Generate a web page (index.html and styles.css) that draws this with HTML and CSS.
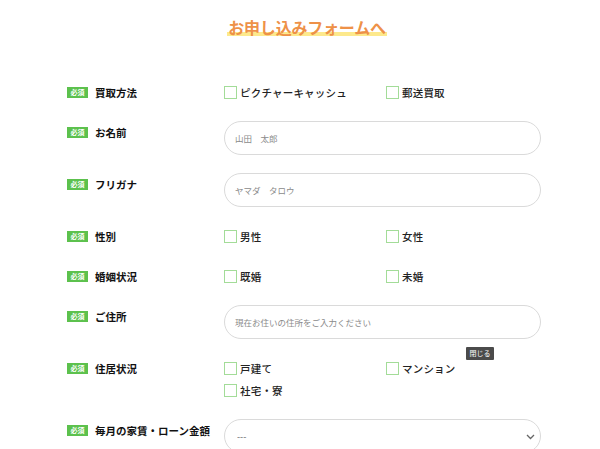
FILE: index.html
```html
<!DOCTYPE html>
<html lang="ja">
<head>
<meta charset="utf-8">
<link rel="stylesheet" href="styles.css">
</head>
<body>
<header class="title"><span class="title-text">お申し込みフォームへ</span></header>
<form class="form">
  <div class="row">
    <div class="label"><span class="badge">必須</span>買取方法</div>
    <div class="choices">
      <label class="choice"><span class="box"></span>ピクチャーキャッシュ</label>
      <label class="choice"><span class="box"></span>郵送買取</label>
    </div>
  </div>
  <div class="row">
    <div class="label"><span class="badge">必須</span>お名前</div>
    <input class="text" type="text" placeholder="山田　太郎">
  </div>
  <div class="row">
    <div class="label"><span class="badge">必須</span>フリガナ</div>
    <input class="text" type="text" placeholder="ヤマダ　タロウ">
  </div>
  <div class="row">
    <div class="label"><span class="badge">必須</span>性別</div>
    <div class="choices">
      <label class="choice"><span class="box"></span>男性</label>
      <label class="choice"><span class="box"></span>女性</label>
    </div>
  </div>
  <div class="row">
    <div class="label"><span class="badge">必須</span>婚姻状況</div>
    <div class="choices">
      <label class="choice"><span class="box"></span>既婚</label>
      <label class="choice"><span class="box"></span>未婚</label>
    </div>
  </div>
  <div class="row">
    <div class="label"><span class="badge">必須</span>ご住所</div>
    <input class="text" type="text" placeholder="現在お住いの住所をご入力ください">
  </div>
  <div class="row">
    <div class="label"><span class="badge">必須</span>住居状況</div>
    <div class="choices with-tip">
      <span class="tooltip">閉じる</span>
      <label class="choice"><span class="box"></span>戸建て</label>
      <label class="choice"><span class="box"></span>マンション</label>
      <label class="choice"><span class="box"></span>社宅・寮</label>
    </div>
  </div>
  <div class="row">
    <div class="label"><span class="badge">必須</span>毎月の家賃・ローン金額</div>
    <div class="select-wrap">
      <select class="select"><option>---</option></select>
      <svg class="chevron" width="9" height="6" viewBox="0 0 9 6"><path d="M1 1l3.5 3.5L8 1" fill="none" stroke="#666" stroke-width="1.3"/></svg>
    </div>
  </div>
</form>
</body>
</html>
```
FILE: styles.css
```css
* { box-sizing: border-box; }
html, body { margin: 0; padding: 0; background: #fff; }
body {
  font-family: "Noto Sans CJK JP", "Noto Sans", sans-serif;
  color: #222;
  width: 600px;
  height: 449px;
  overflow: hidden;
}
.title {
  padding-top: 15px;
  padding-left: 14px;
  text-align: center;
  height: 39px;
}
.title-text {
  font-size: 16px;
  line-height: 24px;
  font-weight: 700;
  color: #ee9148;
  letter-spacing: -0.2px;
  background: linear-gradient(transparent 70%, #fde98c 70%, #fde98c 88%, transparent 88%);
  padding: 0 1px;
}
.form {
  margin-top: 42px;
  padding-left: 67px;
  display: flex;
  flex-direction: column;
  gap: 18px;
}
.row {
  display: grid;
  grid-template-columns: 157px 317px;
  align-items: start;
}
.row-tight { margin-top: -2px; }
.label {
  display: flex;
  align-items: center;
  gap: 7px;
  height: 22px;
  font-size: 10.5px;
  font-weight: 700;
  color: #111;
}
.badge {
  display: inline-block;
  width: 21px;
  height: 11px;
  line-height: 11px;
  text-align: center;
  font-size: 7px;
  font-weight: 700;
  color: #fff;
  background: #5cc14d;
}
.choices {
  display: grid;
  grid-template-columns: 162px auto;
}
.with-tip { position: relative; }
.choice {
  display: flex;
  align-items: center;
  gap: 3px;
  height: 22px;
  font-size: 10.5px;
  font-weight: 500;
  color: #222;
  letter-spacing: 0.2px;
}
.box {
  width: 13px;
  height: 13px;
  border: 1px solid #a3dc98;
  background: #fff;
  flex: none;
}
.text {
  width: 317px;
  height: 34px;
  border: 1px solid #dadada;
  border-radius: 17px;
  padding: 0 10px;
  font-family: inherit;
  font-size: 8.5px;
  color: #333;
  outline: none;
  background: #fff;
}
.text::placeholder { color: #8a8a8a; }
.select-wrap {
  position: relative;
  width: 317px;
}
.select {
  appearance: none;
  -webkit-appearance: none;
  width: 317px;
  height: 34px;
  border: 1px solid #dadada;
  border-radius: 17px;
  padding: 0 12px;
  font-family: inherit;
  font-size: 9px;
  color: #666;
  background: #fff;
  outline: none;
}
.chevron {
  position: absolute;
  right: 6px;
  top: 15px;
}
.tooltip {
  position: absolute;
  left: 242px;
  top: -10px;
  width: 28px;
  height: 13px;
  background: #4b4b4b;
  color: #fff;
  font-size: 7px;
  line-height: 13px;
  text-align: center;
  border-radius: 1px;
}
```
